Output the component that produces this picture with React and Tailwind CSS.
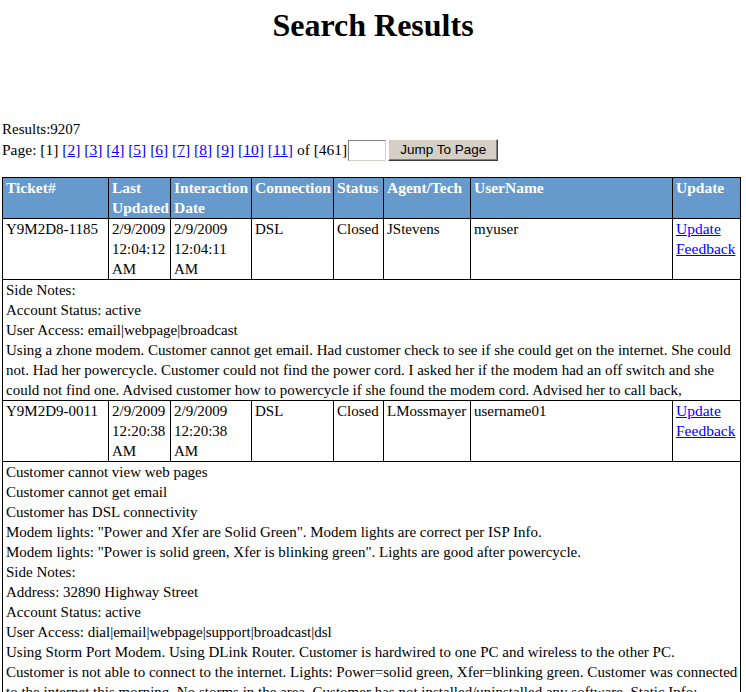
import React from 'react';

const columns = [
  { key: 'ticket', label: 'Ticket#' },
  { key: 'updated', label: 'Last Updated' },
  { key: 'interaction', label: 'Interaction Date' },
  { key: 'connection', label: 'Connection' },
  { key: 'status', label: 'Status' },
  { key: 'agent', label: 'Agent/Tech' },
  { key: 'user', label: 'UserName' },
  { key: 'update', label: 'Update' },
];

const tickets = [
  {
    ticket: 'Y9M2D8-1185',
    updated: ['2/9/2009', '12:04:12', 'AM'],
    interaction: ['2/9/2009', '12:04:11', 'AM'],
    connection: 'DSL',
    status: 'Closed',
    agent: 'JStevens',
    user: 'myuser',
    clipped: true,
    notes: [
      'Side Notes:',
      'Account Status: active',
      'User Access: email|webpage|broadcast',
      'Using a zhone modem. Customer cannot get email. Had customer check to see if she could get on the internet. She could not. Had her powercycle. Customer could not find the power cord. I asked her if the modem had an off switch and she could not find one. Advised customer how to powercycle if she found the modem cord. Advised her to call back,',
    ],
  },
  {
    ticket: 'Y9M2D9-0011',
    updated: ['2/9/2009', '12:20:38', 'AM'],
    interaction: ['2/9/2009', '12:20:38', 'AM'],
    connection: 'DSL',
    status: 'Closed',
    agent: 'LMossmayer',
    user: 'username01',
    clipped: false,
    notes: [
      'Customer cannot view web pages',
      'Customer cannot get email',
      'Customer has DSL connectivity',
      'Modem lights: "Power and Xfer are Solid Green". Modem lights are correct per ISP Info.',
      'Modem lights: "Power is solid green, Xfer is blinking green". Lights are good after powercycle.',
      'Side Notes:',
      'Address: 32890 Highway Street',
      'Account Status: active',
      'User Access: dial|email|webpage|support|broadcast|dsl',
      'Using Storm Port Modem. Using DLink Router. Customer is hardwired to one PC and wireless to the other PC.',
      'Customer is not able to connect to the internet. Lights: Power=solid green, Xfer=blinking green. Customer was connected to the internet this morning. No storms in the area. Customer has not installed/uninstalled any software. Static Info:',
    ],
  },
];

const pages = ['2', '3', '4', '5', '6', '7', '8', '9', '10', '11'];

const Cell = ({ children, head }) => (
  <div
    className={`pl-[3px] pr-px ${
      head ? 'bg-[#6699cc] text-white font-bold text-[15.5px]' : 'bg-white text-black'
    }`}
  >
    {children}
  </div>
);

const Lines = ({ items }) => items.map((l, i) => <div key={i}>{l}</div>);

export default function App() {
  return (
    <div className="min-h-[692px] bg-white text-black text-[15px] leading-[20px] font-['Liberation_Serif','Times_New_Roman',serif] overflow-hidden">
      <h1 className="mt-[7px] text-center text-[32px] leading-[37px] font-bold">Search Results</h1>

      <div className="mt-[75px] pl-[2px]">Results:9207</div>

      {/* pager + jump box */}
      <div className="flex items-center h-[22px] pl-[2px] text-[15.5px] whitespace-pre">
        <span>Page: [1] </span>
        {pages.map((p) => (
          <span key={p}>
            <a href="#" className="text-[#0000ff] underline">[{p}]</a>{' '}
          </span>
        ))}
        <span>of [461]</span>
        <input
          type="text"
          className="ml-px w-[38px] h-[21px] bg-white border border-t-[#808080] border-l-[#808080] border-b-[#d4d0c8] border-r-[#d4d0c8] outline-none"
        />
        <button className="ml-[2px] w-[110px] h-[22px] bg-[#d4d0c8] text-black text-[13.5px] leading-none font-['Liberation_Sans',Arial,sans-serif] border border-t-white border-l-white border-b-[#404040] border-r-[#404040] shadow-[inset_-1px_-1px_0_#808080]">
          Jump To Page
        </button>
      </div>

      {/* results table */}
      <div className="mt-[16px] ml-[2px] w-[739px] grid grid-cols-[105px_61px_80px_81px_49px_86px_201px_67px] gap-px p-px bg-black">
        {columns.map((c) => (
          <Cell key={c.key} head>{c.label}</Cell>
        ))}

        {tickets.map((t) => (
          <React.Fragment key={t.ticket}>
            <Cell>{t.ticket}</Cell>
            <Cell><Lines items={t.updated} /></Cell>
            <Cell><Lines items={t.interaction} /></Cell>
            <Cell>{t.connection}</Cell>
            <Cell>{t.status}</Cell>
            <Cell>{t.agent}</Cell>
            <Cell>{t.user}</Cell>
            <Cell>
              <a href="#" className="block text-[#0000ff] underline text-[15.5px]">Update</a>
              <a href="#" className="block text-[#0000ff] underline text-[15.5px]">Feedback</a>
            </Cell>
            <div className={`col-span-8 bg-white pl-[3px] pr-px ${t.clipped ? 'h-[120px] overflow-hidden' : ''}`}>
              <Lines items={t.notes} />
            </div>
          </React.Fragment>
        ))}
      </div>
    </div>
  );
}
